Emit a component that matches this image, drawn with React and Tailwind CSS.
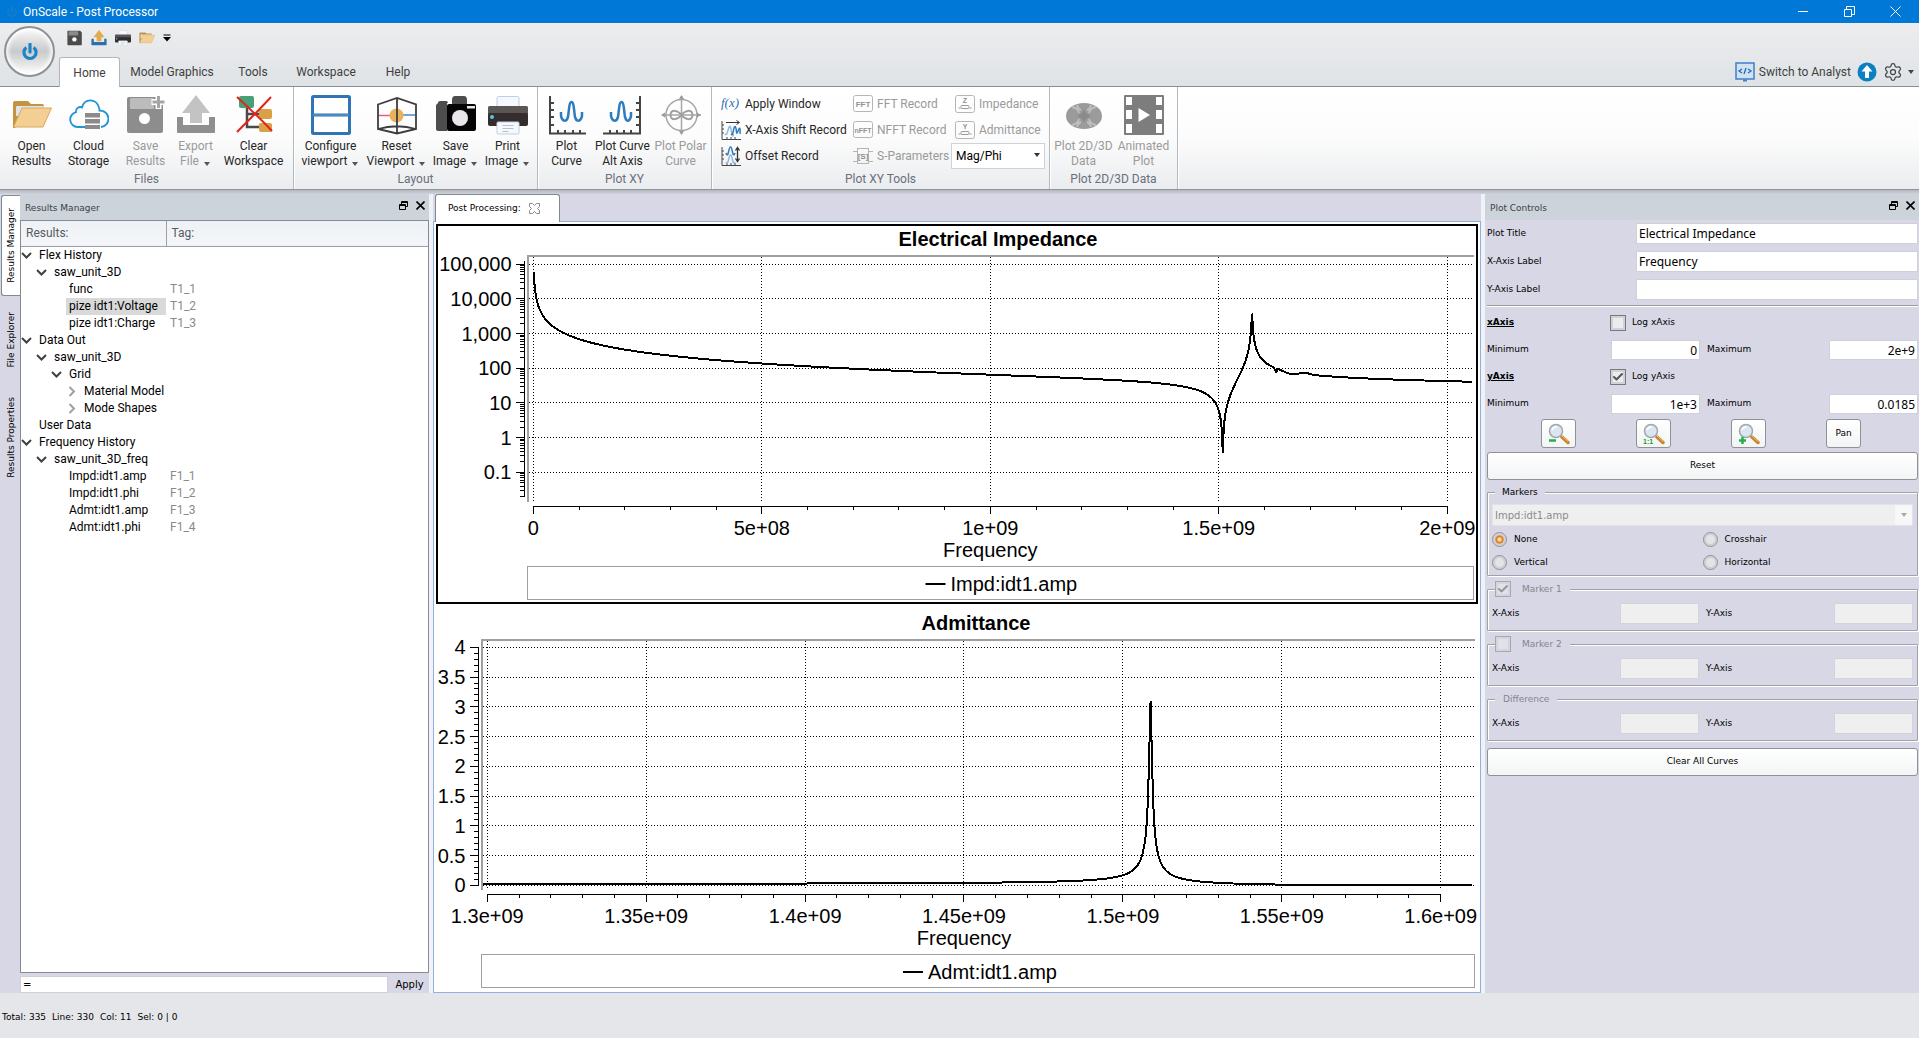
import React from 'react';
import clsx from 'clsx';
import { Check, Settings } from 'lucide-react';

/* ---------- icons ---------- */

const Caret = ({ className }) => (
  <svg viewBox="0 0 8 4" className={clsx('inline-block h-1 w-2 shrink-0', className)}>
    <path d="M1 0h6L4 4z" fill="currentColor" />
  </svg>
);

const FolderArt = () => (
  <>
    <path d="M1 33V8q0-2 2-2h13l3 3h11q2 0 2 2v8H12L3 33z" fill="#c4933f" />
    <path d="M4 12q0-1 1-1h26q1 0 1 1v9H4z" fill="#dfe3ea" />
    <path d="M10 13h29.500L31 32H1.500z" fill="#f4cf93" stroke="#d8a95a" strokeLinejoin="round" />
  </>
);

const CloudArt = () => (
  <>
    <path
      d="M17 32H8.500A7.500 7.500 0 0 1 7 17.200C6.500 13.500 10 11 13 12.500 15.500 3 27 3 30 12.500c.4 1 .5 2 .5 3.200A8 8 0 0 1 32 32"
      fill="none"
      stroke="#2094d6"
      strokeWidth="1.8"
    />
    <path d="M16 18h15v4.500H16zM16 24h15v4.500H16zM16 30h15v4H16z" fill="#8b8b8b" />
  </>
);

const FloppyArt = ({ color = '#8d8d8d', label = '#bcbcbc', plus = true }) => (
  <>
    <path d="M3 2h30l4 4v30q0 2-2 2H3q-2 0-2-2V4q0-2 2-2z" fill={color} />
    <rect x="4" y="3" width="24" height="11" rx="1.500" fill={label} />
    <circle cx="18.500" cy="23.500" r="5.500" fill="#fff" />
    {plus && <path d="M32.500 0v14M25.500 7h14" stroke="#fff" strokeWidth="6" />}
    {plus && <path d="M32.500 1v12M26.500 7h12" stroke="#a5a5a5" strokeWidth="3" />}
  </>
);

const ExportArt = ({ tray = '#8f8f8f', arrow = '#c3c3c3' }) => (
  <>
    <path d="M1 22h6v8h26v-8h6v15q0 1-1 1H2q-1 0-1-1z" fill={tray} />
    <path d="M20 0 34 18h-8v10H14V18H6z" fill={arrow} />
  </>
);

const ClearArt = () => (
  <>
    <path d="M13 12v20h14M13 19h12" fill="none" stroke="#4a4a4a" strokeWidth="2.500" />
    <rect x="5" y="1" width="15" height="12" rx="2" fill="#48a078" />
    <rect x="25" y="14" width="13" height="10" rx="2" fill="#d9a145" />
    <rect x="25" y="28" width="13" height="9" rx="2" fill="#d9a145" />
    <path d="M3 2c12 11 25 23 35 34M37 2C27 13 14 26 3 37" fill="none" stroke="#e0241c" strokeWidth="2" />
  </>
);

const ConfigureArt = () => (
  <>
    <rect x="1.500" y="1.500" width="37" height="37" rx="1" fill="#fff" stroke="#2f75b5" strokeWidth="3" />
    <path d="M2 20h36" stroke="#2f75b5" strokeWidth="3" />
    <path d="M2 20h36" stroke="#8db8dd" strokeWidth="0.600" />
  </>
);

const ResetArt = () => (
  <>
    <path d="M2 20.500h13" stroke="#e2607e" strokeWidth="1.500" />
    <path d="M24 20h14" stroke="#3d8bcd" strokeWidth="1.500" />
    <circle cx="19.500" cy="20.500" r="7" fill="#e9b25a" />
    <path d="M1 9.500 20 3l19 6.500V34l-19 4.500L1 34zM20 3v35M1 34c12-3.500 26-3.500 38 0" fill="none" stroke="#3d3d3d" strokeWidth="1.800" />
  </>
);

const CameraArt = () => (
  <>
    <path d="M2 8q0-2 2-2h6q2 0 2 2h-1v28H2q-2 0-2-2V10z" fill="#4d4d4d" />
    <path d="M16 5q0-4 3-4h9q3 0 3 4v5H16z" fill="#4d4d4d" />
    <rect x="11" y="9" width="29" height="27" rx="2" fill="#050505" />
    <circle cx="24" cy="23" r="8" fill="#e9e7ea" />
    <rect x="31" y="11" width="8" height="2.500" fill="#e9e7ea" />
  </>
);

const PrinterArt = () => (
  <>
    <rect x="9" y="1.500" width="22" height="18" rx="1.500" fill="#f5f8fc" stroke="#bcd0ea" />
    <rect x="0" y="11" width="40" height="9" rx="1.500" fill="#5b5656" />
    <rect x="0" y="18" width="40" height="13" rx="2" fill="#342c2d" />
    <rect x="9" y="27" width="22" height="12" rx="1" fill="#f5f8fc" stroke="#bcd0ea" />
    <path d="M14.500 30.500h11M14.500 33.500h11M14.500 36.500h6" stroke="#bdbdbd" />
    <circle cx="4" cy="22" r="2" fill="#55c3e8" />
  </>
);

const PlotCurveArt = () => (
  <>
    <path d="M3 1v37.500h36M3 8h4M3 15h4M3 22h4M3 30h4M11 38v-3M18 38v-3M26 38v-3M33 38v-3" fill="none" stroke="#444" strokeWidth="2" />
    <path d="M14 17v4c1 5 5 7 7 1 1-6 1-15 3.500-15s2.500 9 3.500 15c2 6 6 4 7-1v-4" fill="none" stroke="#2e7bc0" strokeWidth="2.500" />
  </>
);

const AltAxisArt = () => (
  <>
    <path d="M37 1v37.500H0M37 8h-4M37 15h-4M37 22h-4M37 30h-4M28 38v-3M21 38v-3M14 38v-3M7 38v-3" fill="none" stroke="#444" strokeWidth="2" />
    <path d="M8 17v4c1 5 5 7 7 1 1-6 1-15 3.500-15s2.500 9 3.500 15c2 6 5 4 6-1v-4" fill="none" stroke="#2e7bc0" strokeWidth="2.500" />
  </>
);

const PolarArt = () => (
  <>
    <circle cx="20.500" cy="20" r="15.500" fill="none" stroke="#a6a6a6" strokeWidth="1.500" />
    <path d="M20.500 1v38M1 20h39" stroke="#a6a6a6" strokeWidth="1.500" />
    <path d="m20.500 0 2.500 4h-5zM20.500 40l2.500-4h-5zM0 20l4-2.500v5zM40 20l-4-2.500v5z" fill="#9b9b9b" />
    <path d="M20.500 20c-4-5-11-6-11 0s7 5 11 0 11-6 11 0-7 5-11 0z" fill="none" stroke="#a0a0a0" strokeWidth="2" />
  </>
);

const MeshArt = () => (
  <>
    <ellipse cx="20" cy="21" rx="18" ry="13" fill="#9b9b9b" />
    <path d="M8 12q6 1 7 6M32 12q-6 1-7 6M8 30q6-1 7-6M32 30q-6-1-7-6M13 10q1 4 4 5M27 10q-1 4-4 5M13 32q1-4 4-5M27 32q-1-4-4-5" fill="none" stroke="#bdbdbd" strokeWidth="2" />
    <path d="M20 14q1 5 7 7-6 2-7 7-1-5-7-7 6-2 7-7z" fill="#8a8a8a" />
  </>
);

const FilmArt = () => (
  <>
    <rect width="40" height="40" rx="1" fill="#7d7d7d" />
    <path d="M2 2h6v8H2zM2 15h6v9H2zM2 29h6v9H2zM32 2h6v8h-6zM32 15h6v9h-6zM32 29h6v9h-6z" fill="#fff" />
    <path d="M14.500 13v14L26 20z" fill="#fff" />
  </>
);

const FxArt = () => (
  <text x="0" y="13" fontFamily="Liberation Serif" fontStyle="italic" fontSize="13" fill="#2f6fae">f(x)</text>
);

const ShiftArt = () => (
  <>
    <path d="M1 1v18.500h19M1 5h2M1 9h2M1 13h2M6 19v-2M10 19v-2M14 19v-2" fill="none" stroke="#444" />
    <path d="M5 2.500h13M15.500 0.500l3 2-3 2" fill="none" stroke="#333" />
    <path d="M4 14q1.500 2 2.500-2T8.500 6.500t2 5.500 2 2" fill="none" stroke="#8fb8de" strokeWidth="1.500" />
    <path d="M10 14q1.500 2 2.500-3.500T14.500 7t1 5 2-2 1.500 4" fill="none" stroke="#2e7bc0" strokeWidth="1.500" />
  </>
);

const OffsetArt = () => (
  <>
    <path d="M1 1v18.500h19M1 5h2M1 9h2M1 13h2M6 19v-2M10 19v-2M14 19v-2" fill="none" stroke="#444" />
    <path d="M5 7q1.500 4 2.500-1T9.500 1t2 5 2.500 1" fill="none" stroke="#2e7bc0" strokeWidth="1.500" />
    <path d="M5 16q1.500 3 2.500-2t2-5 2 5 2.500 2" fill="none" stroke="#8fb8de" strokeWidth="1.500" />
    <path d="M16.500 2v13M14.500 4.500l2-3 2 3M14.500 12.500l2 3 2-3" fill="none" stroke="#333" strokeWidth="1.300" />
  </>
);

const BoxedArt = ({ text }) => (
  <>
    <rect x="0.500" y="1.500" width="19" height="16" rx="2" fill="none" stroke="#b5b5b5" />
    <text x="10" y="12.500" textAnchor="middle" fontFamily="Liberation Sans" fontWeight="bold" fontSize={text.length > 3 ? 7 : 8} fill="#939393">{text}</text>
  </>
);

const SParamArt = () => (
  <>
    <rect x="4.500" y="2.500" width="11" height="15" fill="none" stroke="#b5b5b5" />
    <path d="M0 5.500h4M0 15.500h4M16 5.500h4M16 15.500h4" stroke="#b5b5b5" />
    <text x="10" y="13" textAnchor="middle" fontFamily="Liberation Sans" fontWeight="bold" fontSize="8" fill="#8f8f8f">[S]</text>
  </>
);

const PortArt = ({ text }) => (
  <>
    <rect x="0.500" y="1.500" width="19" height="17" rx="2" fill="none" stroke="#b5b5b5" />
    <text x="10" y="9" textAnchor="middle" fontFamily="Liberation Sans" fontWeight="bold" fontSize="7" fill="#8f8f8f">{text}</text>
    <rect x="6" y="11.500" width="8" height="3" rx="1" fill="none" stroke="#9b9b9b" />
    <path d="M3.500 14h2M14.500 14h2" stroke="#9b9b9b" />
  </>
);

const PowerArt = () => (
  <>
    <path d="M12 10a13.500 13.500 0 1 0 16 0" fill="none" stroke="#1b83c6" strokeWidth="7" />
    <path d="M20 2v18" stroke="#1b83c6" strokeWidth="7" strokeLinecap="round" />
  </>
);

const ZoomArt = ({ sign }) => (
  <>
    <path d="m14 14 6 5.500" stroke="#c9812b" strokeWidth="3.500" strokeLinecap="round" />
    <path d="m14 13 6 5.500" stroke="#f2c070" strokeWidth="1" strokeLinecap="round" />
    <circle cx="8" cy="8" r="6.500" fill="#dbe7f0" stroke="#a3a8ae" strokeWidth="1.500" />
    <path d="M4 7q1-3.500 5-3" fill="none" stroke="#fff" strokeWidth="1.500" />
    {sign === '-' && <path d="M1 17.500h7" stroke="#22b14c" strokeWidth="2.500" />}
    {sign === '+' && <path d="M1 17.500h7M4.500 14v7" stroke="#22b14c" strokeWidth="2.500" />}
    {sign === '1' && <text x="0" y="21" fontFamily="Liberation Sans" fontWeight="bold" fontSize="7" fill="#1b9e1b">1:1</text>}
  </>
);

const TreeArrow = ({ open }) => (
  open ? (
    <svg viewBox="0 0 11 11" className="size-[11px] text-[#404040]"><path d="m1 3 4.500 4.500L10 3" fill="none" stroke="currentColor" strokeWidth="2" /></svg>
  ) : (
    <svg viewBox="0 0 11 11" className="size-[11px] text-[#a0a0a0]"><path d="m3.500 1 4.500 4.500-4.500 4.500" fill="none" stroke="currentColor" strokeWidth="2" /></svg>
  )
);

const Icon = ({ size = 'size-10', box = 40, children }) => (
  <svg viewBox={`0 0 ${box} ${box}`} className={clsx('shrink-0', size)} aria-hidden="true">{children}</svg>
);

/* ---------- ribbon ---------- */

const ribbonGroups = [
  {
    title: 'Files',
    width: 'w-[294px]',
    items: [
      { lines: ['Open', 'Results'], art: <FolderArt />, width: 'w-[60px]' },
      { lines: ['Cloud', 'Storage'], art: <CloudArt />, width: 'w-[54px]' },
      { lines: ['Save', 'Results'], art: <FloppyArt />, width: 'w-[60px]', disabled: true },
      { lines: ['Export', 'File'], art: <ExportArt />, width: 'w-[40px]', disabled: true, menu: true },
      { lines: ['Clear', 'Workspace'], art: <ClearArt />, width: 'w-[76px]' },
    ],
  },
  {
    title: 'Layout',
    width: 'w-[244px]',
    items: [
      { lines: ['Configure', 'viewport'], art: <ConfigureArt />, width: 'w-[66px]', menu: true },
      { lines: ['Reset', 'Viewport'], art: <ResetArt />, width: 'w-[66px]', menu: true },
      { lines: ['Save', 'Image'], art: <CameraArt />, width: 'w-[52px]', menu: true },
      { lines: ['Print', 'Image'], art: <PrinterArt />, width: 'w-[52px]', menu: true },
    ],
  },
  {
    title: 'Plot XY',
    width: 'w-[174px]',
    items: [
      { lines: ['Plot', 'Curve'], art: <PlotCurveArt />, width: 'w-[54px]' },
      { lines: ['Plot Curve', 'Alt Axis'], art: <AltAxisArt />, width: 'w-[58px]' },
      { lines: ['Plot Polar', 'Curve'], art: <PolarArt />, width: 'w-[58px]', disabled: true },
    ],
  },
];

const RibbonButton = ({ lines, art, width, disabled, menu }) => (
  <button
    disabled={disabled}
    className={clsx('flex flex-col items-center text-[12px] leading-[15px] whitespace-nowrap', width, disabled ? 'text-[#9a9a9a]' : 'text-[#262626]')}
  >
    <Icon>{art}</Icon>
    <span className="mt-1">{lines[0]}</span>
    <span className={clsx(menu && 'flex items-center')}>
      {lines[1]}
      {menu && <Caret className="mt-1 ml-1 text-[#555]" />}
    </span>
  </button>
);

const RibbonGroup = ({ title, width, children }) => (
  <section className={clsx('flex flex-col border-r border-[#b4b9bf] pt-2 shadow-[1px_0_0_#fff]', width)}>
    <div className="flex flex-1 justify-center">{children}</div>
    <h2 className="pb-0.5 text-center text-[12px] leading-4 text-[#6a6f7c]">{title}</h2>
  </section>
);

const ToolRow = ({ art, label, disabled }) => (
  <button disabled={disabled} className={clsx('flex h-[26px] items-center gap-1 whitespace-nowrap', disabled ? 'text-[#9a9a9a]' : 'text-[#262626]')}>
    <Icon size="size-5" box={20}>{art}</Icon>
    {label}
  </button>
);

const Ribbon = () => (
  <div className="flex h-[102px] bg-linear-to-b from-white via-[#fcfcfc] to-[#eaecef]">
    {ribbonGroups.map((g) => (
      <RibbonGroup key={g.title} title={g.title} width={g.width}>
        {g.items.map((item) => <RibbonButton key={item.lines.join()} {...item} />)}
      </RibbonGroup>
    ))}
    <RibbonGroup title="Plot XY Tools" width="w-[338px]">
      <div className="-mt-1 flex w-full pl-[9px] text-[12px]">
        <div className="w-[132px]">
          <ToolRow art={<FxArt />} label="Apply Window" />
          <ToolRow art={<ShiftArt />} label="X-Axis Shift Record" />
          <ToolRow art={<OffsetArt />} label="Offset Record" />
        </div>
        <div className="w-[102px]">
          <ToolRow art={<BoxedArt text="FFT" />} label="FFT Record" disabled />
          <ToolRow art={<BoxedArt text="nFFT" />} label="NFFT Record" disabled />
          <ToolRow art={<SParamArt />} label="S-Parameters" disabled />
        </div>
        <div className="-ml-1 flex-1 pr-1">
          <div className="pl-1">
            <ToolRow art={<PortArt text="Z" />} label="Impedance" disabled />
            <ToolRow art={<PortArt text="Y" />} label="Admittance" disabled />
          </div>
          <div className="relative">
            <select aria-label="Value format" className="h-[26px] w-full appearance-none border border-[#cfd2d8] bg-white pl-1 text-black">
              <option>Mag/Phi</option>
            </select>
            <Caret className="pointer-events-none absolute top-2.5 right-1 text-[#333]" />
          </div>
        </div>
      </div>
    </RibbonGroup>
    <RibbonGroup title="Plot 2D/3D Data" width="w-[128px]">
      <RibbonButton lines={['Plot 2D/3D', 'Data']} art={<MeshArt />} width="w-[60px]" disabled />
      <RibbonButton lines={['Animated', 'Plot']} art={<FilmArt />} width="w-[60px]" disabled />
    </RibbonGroup>
  </div>
);

const TitleBar = () => (
  <header className="flex h-[23px] items-center bg-[#0078d7] pr-px text-[12px] text-white">
    <div className="flex w-[23px] justify-center">
      <svg viewBox="0 0 40 40" className="size-3 opacity-60"><PowerArt /></svg>
    </div>
    <h1 className="flex-1">OnScale - Post Processor</h1>
    <button aria-label="Minimize" className="flex w-[46px] justify-center">
      <svg viewBox="0 0 11 11" className="size-[11px]"><path d="M0 5.500h10" stroke="#fff" /></svg>
    </button>
    <button aria-label="Restore" className="flex w-[46px] justify-center">
      <svg viewBox="0 0 11 11" className="size-[11px]"><path d="M.5 3.500h7v7h-7zM2.500 3V.5h8v8H8" fill="none" stroke="#fff" /></svg>
    </button>
    <button aria-label="Close" className="flex w-[46px] justify-center">
      <svg viewBox="0 0 11 11" className="size-[11px]"><path d="m.5.5 10 10M10.500.5l-10 10" stroke="#fff" /></svg>
    </button>
  </header>
);

const tabs = [
  ['Model Graphics', 'w-[104px]'],
  ['Tools', 'w-[58px]'],
  ['Workspace', 'w-[88px]'],
  ['Help', 'w-[56px]'],
];

const TabBar = () => (
  <div className="flex h-16 border-b border-[#84919a] bg-linear-to-b from-[#ededef] to-[#dfe3e6] text-[12px] text-[#3f3f3f]">
    <div className="w-[59px] pt-[3px] pl-1">
      <button
        aria-label="Application menu"
        className="flex size-[51px] items-center justify-center rounded-full border-2 border-[#8f9193] bg-linear-to-b from-[#fafafa] via-[#c9cacb] to-white shadow-[inset_0_0_4px_2px_#fff]"
      >
        <Icon size="size-[18px]"><PowerArt /></Icon>
      </button>
    </div>
    <div className="flex flex-1 flex-col">
      <div className="flex h-[34px] items-center gap-2 pb-1 pl-2">
        <button aria-label="Save"><Icon size="size-4"><FloppyArt color="#4b4b4b" label="#8a8a8a" plus={false} /></Icon></button>
        <button aria-label="Export"><Icon size="size-4"><ExportArt tray="#2f6fae" arrow="#e3ab50" /></Icon></button>
        <button aria-label="Print"><Icon size="size-4"><PrinterArt /></Icon></button>
        <button aria-label="Open"><Icon size="size-4"><FolderArt /></Icon></button>
        <button aria-label="Customize toolbar">
          <svg viewBox="0 0 8 8" className="size-2"><path d="M.5 1h7" stroke="#000" /><path d="M0 3h8L4 7.500z" /></svg>
        </button>
      </div>
      <nav className="flex flex-1">
        <button className="-mb-px w-[61px] rounded-t-[3px] border border-b-0 border-[#b0b6bb] bg-white">Home</button>
        {tabs.map(([label, width]) => <button key={label} className={clsx('pt-px', width)}>{label}</button>)}
        <div className="ml-auto flex items-center gap-1">
          <button className="flex items-center gap-1">
            <svg viewBox="0 0 20 20" className="size-5">
              <rect x="1" y="1" width="18" height="16" fill="#d3e2f3" stroke="#3f7fcb" strokeWidth="1.500" />
              <path d="M7 7 4 9l3 2M13 7l3 2-3 2M11 6l-2 6" fill="none" stroke="#1b6fae" strokeWidth="1.300" />
              <path d="M8 18.500h4" stroke="#3f7fcb" strokeWidth="2" />
            </svg>
            Switch to Analyst
          </button>
          <button aria-label="Upload" className="ml-0.5">
            <svg viewBox="0 0 20 20" className="size-5">
              <circle cx="10" cy="10" r="9.500" fill="#0a7fc2" />
              <path d="m10 3 5.500 6.500H12V16H8V9.500H4.500z" fill="#fff" />
            </svg>
          </button>
          <button aria-label="Settings" className="ml-0.5 flex items-center gap-1 pr-1 text-[#444]">
            <Settings className="size-5" strokeWidth={1.5} />
            <Caret />
          </button>
        </div>
      </nav>
    </div>
  </div>
);

/* ---------- left dock ---------- */

const sideTabs = [
  ['Results Manager', 'h-[101px]', true],
  ['File Explorer', 'h-[88px]'],
  ['Results Properties', 'h-[106px]'],
];

const treeRows = [
  { name: 'Flex History', level: 0, open: true },
  { name: 'saw_unit_3D', level: 1, open: true },
  { name: 'func', level: 2, tag: 'T1_1' },
  { name: 'pize idt1:Voltage', level: 2, tag: 'T1_2', selected: true },
  { name: 'pize idt1:Charge', level: 2, tag: 'T1_3' },
  { name: 'Data Out', level: 0, open: true },
  { name: 'saw_unit_3D', level: 1, open: true },
  { name: 'Grid', level: 2, open: true },
  { name: 'Material Model', level: 3, open: false },
  { name: 'Mode Shapes', level: 3, open: false },
  { name: 'User Data', level: 0 },
  { name: 'Frequency History', level: 0, open: true },
  { name: 'saw_unit_3D_freq', level: 1, open: true },
  { name: 'Impd:idt1.amp', level: 2, tag: 'F1_1' },
  { name: 'Impd:idt1.phi', level: 2, tag: 'F1_2' },
  { name: 'Admt:idt1.amp', level: 2, tag: 'F1_3' },
  { name: 'Admt:idt1.phi', level: 2, tag: 'F1_4' },
];

const indent = ['pl-0', 'pl-[15px]', 'pl-[30px]', 'pl-[45px]'];

const DockHeader = ({ title }) => (
  <div className="flex h-[26px] shrink-0 items-start gap-2 bg-[#ccd3da] pr-1 pl-[5px] text-[9px] text-[#3d4247]">
    <h2 className="flex-1 pt-2">{title}</h2>
    <button aria-label="Float panel" className="pt-[7px]">
      <svg viewBox="0 0 9 9" className="size-[9px]"><path d="M.5 3.500h6v5h-6zM.5 4.500h6M2.500 3V.5h6v5H7M2.500 1.500h6" fill="none" stroke="#000" /></svg>
    </button>
    <button aria-label="Close panel" className="pt-[7px]">
      <svg viewBox="0 0 9 9" className="size-[9px]"><path d="m.5.5 8 8M8.500.5l-8 8" stroke="#000" strokeWidth="1.600" /></svg>
    </button>
  </div>
);

const ResultsManager = () => (
  <aside className="flex w-[429px] shrink-0 bg-[#d7d7e5]">
    <div className="flex w-5 flex-col pt-px pl-px">
      {sideTabs.map(([label, height, active]) => (
        <button key={label} className={clsx('flex items-center justify-center pl-0.5', height, active && 'rounded-l-[3px] border border-r-0 border-[#7d8b93] bg-white')}>
          <span className="rotate-180 [writing-mode:vertical-rl]">{label}</span>
        </button>
      ))}
    </div>
    <div className="flex min-w-0 flex-1 flex-col">
      <DockHeader title="Results Manager" />
      <div className='flex-1 border border-[#868a92] bg-white font-["Roboto",sans-serif] text-[12px] text-black'>
        <table className="w-full table-fixed border-collapse">
          <thead>
            <tr className="h-[25px] border-b border-[#9ba1ab] bg-linear-to-b from-[#eef1f5] to-[#f4f6f9] text-left text-[#555b63]">
              <th className="w-[145px] border-r border-[#9ba1ab] pl-[5px] font-normal">Results:</th>
              <th className="pl-[5px] font-normal">Tag:</th>
            </tr>
          </thead>
          <tbody>
            {treeRows.map((row, i) => (
              <tr key={i} className="h-[17px] leading-[17px]">
                <td className={clsx('p-0', indent[row.level])}>
                  <div className="flex items-center">
                    <span className="flex w-[15px]">{row.open !== undefined && <TreeArrow open={row.open} />}</span>
                    <span className={clsx('flex-1 pl-[3px] whitespace-nowrap', row.selected && 'bg-[#d9d9d9]')}>{row.name}</span>
                  </div>
                </td>
                <td className="p-0 pl-1 text-[#8a8a8a]">{row.tag}</td>
              </tr>
            ))}
          </tbody>
        </table>
      </div>
      <div className="flex h-5 items-end">
        <input aria-label="Expression" defaultValue="=" className="h-[17px] flex-1 border border-[#d0d0da] bg-white px-0.5 text-[10px] text-black" />
        <button className="h-[17px] w-[41px] pl-0.5 text-[10px]">Apply</button>
      </div>
    </div>
  </aside>
);

/* ---------- charts ---------- */

// complex magnitude of (1 - f^2/f0^2) with damping 1/q
const term = (f, f0, q) => Math.hypot(1 - (f * f) / (f0 * f0), f / (f0 * q));
// f in GHz
const impedance = (f) => (69.5 / f) * (term(f, 1.5087, 1790) / term(f, 1.5727, 1004));

const range = (from, to, step) => {
  const n = Math.round((to - from) / step);
  return Array.from({ length: n + 1 }, (_, i) => from + i * step);
};

const impedancePoints = () => {
  const fs = [...range(0.0012, 0.06, 0.001), ...range(0.062, 1.45, 0.004), ...range(1.452, 1.62, 0.0005), ...range(1.74, 2.055, 0.005)];
  const pts = fs.map((f) => [f, Math.log10(impedance(f))]);
  // small spurious modes right of the anti-resonance
  const ripple = [[1.626, 1.88], [1.629, 1.98], [1.635, 1.95], [1.65, 1.86], [1.662, 1.82], [1.672, 1.83], [1.68, 1.87], [1.69, 1.87], [1.705, 1.82], [1.72, 1.79]];
  return [...pts, ...ripple].sort((a, b) => a[0] - b[0]);
};

const admittancePoints = () => [...range(1.2987, 1.48, 0.002), ...range(1.4803, 1.54, 0.0004), ...range(1.542, 1.611, 0.002)].map((f) => [f, 1 / impedance(f)]);

const logMinors = range(-2, 5, 1).flatMap((d) => range(2, 9, 1).map((m) => d + Math.log10(m))).filter((v) => v < 5 && v > -1.7);

const charts = [
  {
    title: 'Electrical Impedance',
    legend: 'Impd:idt1.amp',
    width: 1038,
    height: 376,
    plot: { left: 89, top: 29, right: 1036, bottom: 276 },
    x: (f) => 95.3 + 457 * f,
    y: (v) => 142.3 - 34.67 * (v - 2),
    xTicks: [[0, '0'], [0.5, '5e+08'], [1, '1e+09'], [1.5, '1.5e+09'], [2, '2e+09']],
    xMinors: range(0, 2, 0.1),
    yTicks: [[5, '100,000'], [4, '10,000'], [3, '1,000'], [2, '100'], [1, '10'], [0, '1'], [-1, '0.1']],
    yMinors: logMinors,
    yLine: [35, 270],
    titleX: 560,
    points: impedancePoints(),
  },
  {
    title: 'Admittance',
    legend: 'Admt:idt1.amp',
    width: 1042,
    height: 386,
    plot: { left: 45, top: 35, right: 1039, bottom: 286 },
    x: (f) => 51.3 + ((f - 1.3) / 0.05) * 158.9,
    y: (v) => 281.3 - 59.5 * v,
    xTicks: [[1.3, '1.3e+09'], [1.35, '1.35e+09'], [1.4, '1.4e+09'], [1.45, '1.45e+09'], [1.5, '1.5e+09'], [1.55, '1.55e+09'], [1.6, '1.6e+09']],
    xMinors: range(1.3, 1.6, 0.01),
    yTicks: [[4, '4'], [3.5, '3.5'], [3, '3'], [2.5, '2.5'], [2, '2'], [1.5, '1.5'], [1, '1'], [0.5, '0.5'], [0, '0']],
    yMinors: range(0, 4, 0.1),
    yLine: [43, 282],
    titleX: 540,
    points: admittancePoints(),
  },
];

const crisp = (v) => Math.floor(v) + 0.5;

const Chart = ({ title, legend, width, height, plot, x, y, xTicks, xMinors, yTicks, yMinors, yLine, titleX, points }) => {
  const { left, top, right, bottom } = plot;
  const axisX = bottom + 4.5;
  const axisY = left - 2.5;
  const mid = (x(xTicks[0][0]) + x(xTicks[xTicks.length - 1][0])) / 2;
  const legendX = (left + right) / 2 - 75;
  const line = points.map(([a, b]) => `${x(a).toFixed(2)},${y(b).toFixed(2)}`).join(' ');

  return (
    <svg viewBox={`0 0 ${width} ${height}`} className="block h-auto w-full" fontFamily="Liberation Sans, sans-serif" fontSize="20" role="img" aria-label={title}>
      <text x={titleX} y={top - 9} textAnchor="middle" fontWeight="bold">{title}</text>
      <path d={`M${right} ${top + 1}H${left + 1}V${bottom}`} fill="none" stroke="#a0a0a0" strokeWidth="2" />

      <g stroke="#000" strokeDasharray="1 2" shapeRendering="crispEdges">
        {yTicks.map(([v]) => <line key={v} x1={left + 2} x2={right} y1={crisp(y(v))} y2={crisp(y(v))} />)}
        {xTicks.map(([v]) => <line key={v} x1={crisp(x(v))} x2={crisp(x(v))} y1={top + 2} y2={bottom} />)}
      </g>

      <g stroke="#000" shapeRendering="crispEdges">
        <line x1={axisY} x2={axisY} y1={yLine[0]} y2={yLine[1]} />
        <line x1={x(xTicks[0][0])} x2={crisp(x(xTicks[xTicks.length - 1][0])) + 0.5} y1={axisX} y2={axisX} />
        {yTicks.map(([v]) => <line key={v} x1={axisY - 8.5} x2={axisY} y1={crisp(y(v))} y2={crisp(y(v))} />)}
        {yMinors.map((v) => <line key={v} x1={axisY - 4.5} x2={axisY} y1={crisp(y(v))} y2={crisp(y(v))} />)}
        {xTicks.map(([v]) => <line key={v} x1={crisp(x(v))} x2={crisp(x(v))} y1={axisX} y2={axisX + 7.5} />)}
        {xMinors.map((v) => <line key={v} x1={crisp(x(v))} x2={crisp(x(v))} y1={axisX} y2={axisX + 3.5} />)}
      </g>

      {yTicks.map(([v, label]) => <text key={v} x={axisY - 13} y={Math.round(y(v)) + 7} textAnchor="end">{label}</text>)}
      {xTicks.map(([v, label]) => <text key={v} x={x(v)} y={bottom + 33} textAnchor="middle">{label}</text>)}
      <text x={mid} y={bottom + 55} textAnchor="middle">Frequency</text>

      <polyline points={line} fill="none" stroke="#000" strokeWidth="2" strokeLinejoin="bevel" shapeRendering="crispEdges" />

      <rect x={left + 0.5} y={bottom + 64.5} width={right - left - 1} height="33" fill="#fff" stroke="#a0a0a0" />
      <path d={`M${legendX} ${bottom + 82}h20`} stroke="#000" strokeWidth="2" />
      <text x={legendX + 25} y={bottom + 89}>{legend}</text>
    </svg>
  );
};

const PlotArea = () => (
  <main className="flex min-w-0 flex-1 flex-col bg-[#d7d7e5]">
    <div className="flex h-[27px] shrink-0 pl-0.5">
      <button className="z-10 -mb-px flex w-[125px] items-center gap-2 rounded-t-[3px] border border-b-0 border-[#7d8b93] bg-white pl-3">
        Post Processing:
        <svg viewBox="0 0 11 11" className="size-[11px]">
          <path d="M.5.5h3l2 2 2-2h3v3l-2 2 2 2v3h-3l-2-2-2 2h-3v-3l2-2-2-2z" fill="none" stroke="#8a8a8a" />
        </svg>
      </button>
    </div>
    <div className="flex-1 border border-[#8fb0e0] bg-white p-0.5">
      <div className="border-2 border-black"><Chart {...charts[0]} /></div>
      <Chart {...charts[1]} />
    </div>
  </main>
);

/* ---------- right dock ---------- */

const field = 'border border-[#d0d0da] bg-white px-0.5 text-[12px] font-["Noto_Sans",sans-serif]';
const panelButton = 'rounded-[3px] border border-[#8f9196] bg-linear-to-b from-white to-[#f3f4f5]';
const group = 'block rounded-[1px] border border-[#a0a0a6] shadow-[1px_1px_0_#fff,inset_1px_1px_0_#fff]';

const CheckBox = ({ id, checked, disabled }) => (
  <span className={clsx('relative flex size-4 items-center justify-center', disabled && 'opacity-50')}>
    <input
      id={id}
      type="checkbox"
      defaultChecked={checked}
      disabled={disabled}
      className="size-4 appearance-none border border-[#77797e] bg-[#ececee] shadow-[inset_0_0_0_2px_#d2d2d6]"
    />
    {checked && <Check className="pointer-events-none absolute size-3 text-[#555]" strokeWidth={4} />}
  </span>
);

const Radio = ({ label, checked }) => (
  <label className="flex h-[23px] items-center gap-[7px]">
    <input
      type="radio"
      name="marker"
      defaultChecked={checked}
      className="size-[15px] appearance-none rounded-full border border-[#8d8f94] bg-[#e4e4e8] shadow-[inset_0_0_0_2px_#cfcfd4] checked:bg-radial checked:from-[#ffe9b8] checked:from-10% checked:via-[#d9780a] checked:via-35% checked:to-[#f0dcc0] checked:to-60%"
    />
    {label}
  </label>
);

const AxisLimits = ({ axis, log, min, max }) => (
  <>
    <div className="flex h-4 items-center">
      <h3 className="w-[123px] font-bold underline">{axis}</h3>
      <CheckBox id={`log-${axis}`} checked={log} />
      <label htmlFor={`log-${axis}`} className="pl-1.5">Log {axis}</label>
    </div>
    <div className="my-[9px] flex h-5 items-center">
      <label htmlFor={`${axis}-min`} className="w-[124px]">Minimum</label>
      <input id={`${axis}-min`} defaultValue={min} className={clsx(field, 'h-5 w-[89px] text-right')} />
      <label htmlFor={`${axis}-max`} className="flex-1 pl-[7px]">Maximum</label>
      <input id={`${axis}-max`} defaultValue={max} className={clsx(field, 'h-5 w-[89px] text-right')} />
    </div>
  </>
);

const MarkerGroup = ({ title, checkable, checked }) => (
  <fieldset className={clsx(group, 'mt-[5px] h-[50px] px-1')}>
    <legend className="ml-[3px] h-4 bg-[#d7d7e5] text-[#85858d]">
      {checkable ? (
        <span className="flex items-center pr-2">
          <CheckBox id={title} checked={checked} disabled />
          <label htmlFor={title} className="pl-[11px] leading-4">{title}</label>
        </span>
      ) : (
        <span className="px-2 leading-4">{title}</span>
      )}
    </legend>
    <div className="flex items-center pt-[6px]">
      <label htmlFor={`${title}-x`} className="w-[128px]">X-Axis</label>
      <input id={`${title}-x`} disabled className="h-[21px] w-[79px] border border-[#d3d3d8] bg-[#efefef]" />
      <label htmlFor={`${title}-y`} className="flex-1 pl-[7px]">Y-Axis</label>
      <input id={`${title}-y`} disabled className="h-[21px] w-[79px] border border-[#d3d3d8] bg-[#efefef]" />
    </div>
  </fieldset>
);

const labelRows = [
  ['Plot Title', 'Electrical Impedance'],
  ['X-Axis Label', 'Frequency'],
  ['Y-Axis Label', ''],
];

const PlotControls = () => (
  <aside className="w-[434px] shrink-0 bg-[#d7d7e5] text-black">
    <DockHeader title="Plot Controls" />
    <div className="px-0.5 pt-[3px] pr-px">
      {labelRows.map(([label, value]) => (
        <div key={label} className="mb-[7px] flex h-[21px] items-center">
          <label htmlFor={label} className="w-[149px]">{label}</label>
          <input id={label} defaultValue={value} className={clsx(field, 'h-[21px] flex-1')} />
        </div>
      ))}
      <hr className="-mt-0.5 mb-2 h-0.5 border-t border-b border-t-[#9a9a9f] border-b-white" />
      <AxisLimits axis="xAxis" log={false} min="0" max="2e+9" />
      <AxisLimits axis="yAxis" log min="1e+3" max="0.0185" />
      <div className="-mt-1 mb-1 flex gap-[60px] pl-[54px]">
        {['-', '1', '+'].map((sign) => (
          <button key={sign} aria-label={`Zoom ${sign}`} className={clsx(panelButton, 'flex h-[29px] w-[35px] items-center justify-center')}>
            <svg viewBox="0 0 22 22" className="size-[22px]"><ZoomArt sign={sign} /></svg>
          </button>
        ))}
        <button className={clsx(panelButton, 'h-[29px] w-[35px]')}>Pan</button>
      </div>
      <button className={clsx(panelButton, 'block h-7 w-full')}>Reset</button>

      <fieldset className={clsx(group, 'mt-1 h-[92px] px-1')}>
        <legend className="ml-[3px] h-4 bg-[#d7d7e5] px-[7px] leading-4">Markers</legend>
        <div className="relative mt-1">
          <select aria-label="Marker curve" disabled className="h-[22px] w-full appearance-none border border-[#e2e2e8] bg-[#efefef] px-0.5 text-[10px] text-[#8a8a8a] opacity-100">
            <option>Impd:idt1.amp</option>
          </select>
          <span className="pointer-events-none absolute inset-y-px right-px flex w-[17px] items-center justify-center bg-[#f7f7f8]">
            <Caret className="text-[#a8a8a8]" />
          </span>
        </div>
        <div className="grid grid-cols-2 pt-0.5">
          <Radio label="None" checked />
          <Radio label="Crosshair" />
          <Radio label="Vertical" />
          <Radio label="Horizontal" />
        </div>
      </fieldset>

      <MarkerGroup title="Marker 1" checkable checked />
      <MarkerGroup title="Marker 2" checkable />
      <MarkerGroup title="Difference" />
      <button className={clsx(panelButton, 'mt-[7px] block h-7 w-full')}>Clear All Curves</button>
    </div>
  </aside>
);

const App = () => (
  <div className='flex min-h-screen flex-col bg-[#e5e6ea] font-["Roboto",sans-serif]'>
    <TitleBar />
    <TabBar />
    <Ribbon />
    <div className="h-[5px] border-t border-[#8f9498] bg-linear-to-b from-[#b4b7be] to-[#d0d2dc]" />
    <div className='flex bg-[#f1f2f7] font-["DejaVu_Sans",sans-serif] text-[9px] text-black'>
      <ResultsManager />
      <div className="w-1 shrink-0" />
      <PlotArea />
      <div className="w-1 shrink-0" />
      <PlotControls />
    </div>
    <footer className='flex flex-1 items-center gap-[6px] pt-1 pl-0.5 font-["DejaVu_Sans",sans-serif] text-[9px] text-black'>
      <span>Total: 335</span>
      <span>Line: 330</span>
      <span>Col: 11</span>
      <span>Sel: 0 | 0</span>
    </footer>
  </div>
);

export default App;
